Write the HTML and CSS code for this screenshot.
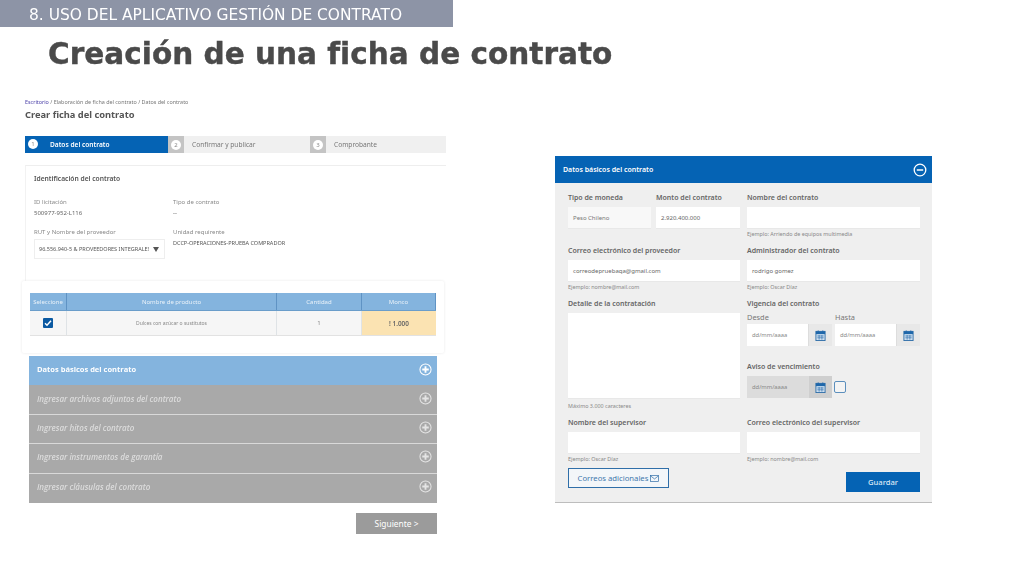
FILE: index.html
```html
<!DOCTYPE html>
<html lang="es">
<head>
<meta charset="utf-8">
<title>Creación de una ficha de contrato</title>
<link rel="stylesheet" href="styles.css">
</head>
<body>
<svg class="defs" width="0" height="0" aria-hidden="true">
  <symbol id="cal" viewBox="0 0 12 12">
    <rect x="1" y="1.5" width="10" height="10" fill="#cfe0f0" stroke="#2f6ea8"/>
    <rect x="1" y="1.5" width="10" height="3" fill="#1f67aa"/>
    <path d="M3.5 .5v2M8.500 .5v2" stroke="#1f67aa"/>
    <path d="M2.500 6.500h7M2.500 8.500h7M4.500 5.500v5M7.500 5.500v5" stroke="#3d7ab3" stroke-width=".8"/>
  </symbol>
  <symbol id="plus" viewBox="0 0 14 14">
    <circle cx="7" cy="7" r="6" fill="none" stroke="currentColor" stroke-width="1.100"/>
    <path d="M7 3.500v7M3.500 7h7" stroke="currentColor" stroke-width="2"/>
  </symbol>
</svg>

<header class="topbar">8. USO DEL APLICATIVO GESTIÓN DE CONTRATO</header>
<h1 class="title">Creación de una ficha de contrato</h1>

<main class="slide">
  <section class="left">
    <p class="crumbs"><span class="crumb-link">Escritorio</span> / Elaboración de ficha del contrato / Datos del contrato</p>
    <h2 class="page-title">Crear ficha del contrato</h2>

    <ol class="steps">
      <li class="step step-on"><span class="step-num">1</span><span class="step-text">Datos del contrato</span></li>
      <li class="step"><span class="step-box"><span class="step-num">2</span></span><span class="step-text">Confirmar y publicar</span></li>
      <li class="step"><span class="step-box"><span class="step-num">3</span></span><span class="step-text">Comprobante</span></li>
    </ol>

    <section class="ident">
      <h3 class="ident-title">Identificación del contrato</h3>
      <div class="ident-grid">
        <div><p class="k">ID licitación</p><p class="v">500977-952-L116</p></div>
        <div><p class="k">Tipo de contrato</p><p class="v">--</p></div>
        <div>
          <p class="k">RUT y Nombre del proveedor</p>
          <div class="select"><span class="select-text">96.556.940-5 &amp; PROVEEDORES INTEGRALE!</span><span class="caret"></span></div>
        </div>
        <div><p class="k">Unidad requirente</p><p class="v v-unit">DCCP-OPERACIONES-PRUEBA COMPRADOR</p></div>
      </div>
    </section>

    <section class="table-card">
      <div class="tbl tbl-head">
        <span class="c">Seleccione</span><span class="c">Nombre de producto</span><span class="c">Cantidad</span><span class="c">Monco</span>
      </div>
      <div class="tbl tbl-row">
        <span class="c"><span class="check"><svg width="8" height="8" viewBox="0 0 8 8"><path d="M1 4.200l2 2 4-4.400" fill="none" stroke="#fff" stroke-width="1.500"/></svg></span></span>
        <span class="c">Dulces con azúcar o sustitutos</span>
        <span class="c c-qty">1</span>
        <span class="c c-amt">! 1.000</span>
      </div>
    </section>

    <div class="accordion">
      <div class="acc acc-on"><span>Datos básicos del contrato</span><svg class="acc-ico"><use href="#plus"/></svg></div>
      <div class="acc"><span>Ingresar archivos adjuntos del contrato</span><svg class="acc-ico"><use href="#plus"/></svg></div>
      <div class="acc"><span>Ingresar hitos del contrato</span><svg class="acc-ico"><use href="#plus"/></svg></div>
      <div class="acc"><span>Ingresar instrumentos de garantía</span><svg class="acc-ico"><use href="#plus"/></svg></div>
      <div class="acc"><span>Ingresar cláusulas del contrato</span><svg class="acc-ico"><use href="#plus"/></svg></div>
    </div>
    <div class="next-wrap"><button class="next">Siguiente &gt;</button></div>
  </section>

  <section class="panel">
    <div class="panel-head">
      <span>Datos básicos del contrato</span>
      <svg class="minus" viewBox="0 0 14 14"><circle cx="7" cy="7" r="5.800" fill="none" stroke="#fff" stroke-width="1.300"/><path d="M3.800 7h6.400" stroke="#fff" stroke-width="1.500"/></svg>
    </div>
    <div class="form">
      <div class="col">
        <div class="pair">
          <div><p class="lbl">Tipo de moneda</p><div class="inp inp-dim">Peso Chileno</div></div>
          <div><p class="lbl">Monto del contrato</p><div class="inp">2.920.400.000</div></div>
        </div>
      </div>
      <div class="col">
        <p class="lbl">Nombre del contrato</p><div class="inp"></div>
        <p class="hint">Ejemplo: Arriendo de equipos multimedia</p>
      </div>

      <div class="col">
        <p class="lbl">Correo electrónico del proveedor</p><div class="inp">correodepruebaqa@gmail.com</div>
        <p class="hint">Ejemplo: nombre@mail.com</p>
      </div>
      <div class="col">
        <p class="lbl">Administrador del contrato</p><div class="inp">rodrigo gomez</div>
        <p class="hint">Ejemplo: Oscar Díaz</p>
      </div>

      <div class="col">
        <p class="lbl">Detalle de la contratación</p>
        <div class="area"></div>
        <p class="hint hint-area">Máximo 3.000 caracteres</p>
      </div>
      <div class="col">
        <p class="lbl">Vigencia del contrato</p>
        <div class="dates">
          <div><p class="sub">Desde</p><div class="date"><span class="date-text">dd/mm/aaaa</span><span class="date-btn"><svg class="cal"><use href="#cal"/></svg></span></div></div>
          <div><p class="sub">Hasta</p><div class="date"><span class="date-text">dd/mm/aaaa</span><span class="date-btn"><svg class="cal"><use href="#cal"/></svg></span></div></div>
        </div>
        <p class="lbl lbl-aviso">Aviso de vencimiento</p>
        <div class="aviso">
          <div class="date date-off"><span class="date-text">dd/mm/aaaa</span><span class="date-btn"><svg class="cal"><use href="#cal"/></svg></span></div>
          <span class="box"></span>
        </div>
      </div>

      <div class="col">
        <p class="lbl">Nombre del supervisor</p><div class="inp"></div>
        <p class="hint">Ejemplo: Oscar Díaz</p>
      </div>
      <div class="col">
        <p class="lbl">Correo electrónico del supervisor</p><div class="inp"></div>
        <p class="hint">Ejemplo: nombre@mail.com</p>
      </div>

      <div class="col foot-l">
        <button class="more">Correos adicionales <svg class="mail" viewBox="0 0 10 8"><rect x=".5" y=".5" width="9" height="7" fill="none" stroke="#2f6ea8" stroke-width=".8"/><path d="M.5 1l4.500 3.500L9.500 1" fill="none" stroke="#2f6ea8" stroke-width=".8"/></svg></button>
      </div>
      <div class="col foot-r"><button class="save">Guardar</button></div>
    </div>
  </section>
</main>
</body>
</html>
```
FILE: styles.css
```css
* { box-sizing: border-box; }
html, body { margin: 0; padding: 0; }
body {
  width: 1024px;
  height: 576px;
  overflow: hidden;
  background: #fff;
  font-family: "Noto Sans", "Open Sans", sans-serif;
  color: #555;
}
p, h1, h2, h3, ol { margin: 0; padding: 0; }
.defs { position: absolute; }

.topbar {
  width: 453px;
  height: 27px;
  padding-left: 29px;
  background: #8d94a6;
  color: #fff;
  font: 15.450px/30px "DejaVu Sans", sans-serif;
  white-space: nowrap;
  filter: blur(.3px);
}
.title {
  margin: 9px 0 0 48px;
  height: 36px;
  font: bold 29.550px/36px "DejaVu Sans", sans-serif;
  color: #4a4a4a;
  -webkit-text-stroke: .4px #4a4a4a;
  white-space: nowrap;
  filter: blur(.3px);
}

.slide {
  display: flex;
  align-items: flex-start;
  padding: 26px 0 0 25px;
  filter: blur(.3px);
}

/* left column */
.left { width: 421px; flex: none; }
.crumbs { height: 8px; font-size: 5.400px; line-height: 8px; color: #777; white-space: nowrap; }
.crumb-link { color: #4a3fa8; }
.page-title { margin-top: 2px; height: 14px; font: 700 9.300px/13px "Noto Sans", sans-serif; color: #555; white-space: nowrap; }

.steps { display: flex; list-style: none; height: 17px; margin-top: 14px; background: #f0f0f0; }
.step { flex: none; width: 142px; display: flex; align-items: center; padding-bottom: 1px; font-size: 6.600px; color: #777; }
.step:last-child { width: 136px; }
.step-on { background: #0563b4; color: #fff; padding-left: 3px; width: 143px; }
.step-box { width: 16px; height: 17px; margin-bottom: -1px; background: #c4c4c4; display: flex; align-items: center; justify-content: center; }
.step-num {
  width: 10px; height: 10px; border-radius: 50%;
  background: #fff; color: #888; font-size: 6px; line-height: 10px; text-align: center;
}
.step-on .step-text { margin-left: 12px; font-weight: 600; }
.step-text { margin-left: 8px; white-space: nowrap; }

.ident {
  height: 116px;
  margin-top: 12px;
  padding: 8px 0 0 8px;
  border-top: 1px solid #eee;
  border-left: 1px solid #f2f2f2;
}
.ident-title { font: 600 6.700px/10px "Noto Sans", sans-serif; color: #555; }
.ident-grid { display: grid; grid-template-columns: 139px 220px; grid-template-rows: 30px auto; margin-top: 14px; }
.k { font-size: 6px; line-height: 9px; color: #888; }
.v { font-size: 6px; line-height: 10px; color: #666; margin-top: 1px; white-space: nowrap; }
.v-unit { font-size: 5.500px; color: #555; }
.select {
  width: 131px; height: 20px; margin-top: 2px; padding: 0 5px 0 4px;
  display: flex; align-items: center; justify-content: space-between;
  border: 1px solid #eee;
  font-size: 5.500px; color: #555;
}
.select-text { white-space: nowrap; overflow: hidden; width: 110px; }
.caret { width: 0; height: 0; border: 3px solid transparent; border-top: 5px solid #555; border-bottom: 0; }

.table-card {
  width: 422px;
  height: 72px;
  margin: 0 0 3px -3px;
  padding: 12px 8px 0;
  border-radius: 2px;
  box-shadow: 0 0 3px #e8e8e8;
}
.tbl { display: grid; grid-template-columns: 37px 210px 85px 74px; width: 406px; font-size: 5.500px; text-align: center; }
.c { display: flex; align-items: center; justify-content: center; border-right: 1px solid #dfe3e6; white-space: nowrap; }
.tbl-head { height: 17px; background: #84b4de; color: #eaf2f9; font-size: 6px; }
.tbl-head .c { border-right-color: #5f93c4; }
.tbl-row { height: 26px; background: #f6f6f6; border-top: 1px solid #6a9dca; border-bottom: 1px solid #e2e2e2; color: #888; font-size: 5px; }
.c-qty { font-size: 6px; }
.c-amt { background: #fbe3b2; color: #666; font-size: 6.400px; font-weight: 600; border: 0; }
.check { width: 10px; height: 10px; border-radius: 1px; background: #0b5aa2; display: flex; align-items: center; justify-content: center; }

.accordion { width: 408px; margin-left: 4px; }
.acc {
  height: 29.400px;
  padding: 0 5px 3px 8px;
  display: flex; align-items: center; justify-content: space-between;
  background: #a9a9a9;
  border-bottom: 1px solid #d9d9d9;
  color: #dcdcdc;
  font: italic 600 8px "Open Sans", sans-serif;
}
.acc:last-child { border-bottom: 0; }
.acc-on { background: #84b4de; color: #fff; font-style: normal; border-bottom: 0; font-size: 7.500px; font-weight: 700; }
.acc-ico { width: 13px; height: 13px; color: #e4e4e4; flex: none; }
.acc-on .acc-ico { color: #fff; }
.next-wrap { width: 408px; margin: 10px 0 0 4px; display: flex; justify-content: flex-end; }
.next {
  width: 81px; height: 21px; padding: 0; border: 0;
  background: #9b9b9b; color: #fff;
  font: 8.400px "Noto Sans", sans-serif;
}

/* right panel */
.panel {
  width: 377px;
  height: 347px;
  margin: 58px 0 0 109px;
  flex: none;
  background: #efefef;
  border-bottom: 1px solid #bdbdbd;
}
.panel-head {
  height: 27px; padding: 0 5px 0 8px;
  display: flex; align-items: center; justify-content: space-between;
  background: #0563b4; color: #fff;
  font: 600 7px "Noto Sans", sans-serif;
}
.minus { width: 14px; height: 14px; }
.form {
  display: grid;
  grid-template-columns: 172px 173px;
  column-gap: 7px;
  padding: 9px 0 0 13px;
}
.col { min-width: 0; }
.pair { display: grid; grid-template-columns: 83px 84px; column-gap: 5px; }
.lbl { height: 15px; font: 600 7px/11px "Noto Sans", sans-serif; color: #666; white-space: nowrap; }
.lbl-aviso { margin-top: 15px; }
.sub { height: 9px; margin-bottom: 2px; font-size: 7.400px; line-height: 9px; color: #777; }
.inp {
  height: 22px; padding: 0 5px;
  display: flex; align-items: center;
  background: #fff; border-bottom: 1px solid #e8e8e8;
  font-size: 6px; color: #666; white-space: nowrap;
}
.inp-dim { background: #f8f8f8; color: #777; }
.hint { height: 16px; padding-top: 1px; font-size: 5.400px; line-height: 8px; color: #888; white-space: nowrap; }
.hint-area { height: 18px; padding-top: 3px; }
.area { height: 86px; background: #fff; border-bottom: 1px solid #e8e8e8; }
.dates { display: grid; grid-template-columns: 85px 85px; column-gap: 3px; }
.date { width: 85px; height: 22px; display: flex; background: #fff; }
.date-text { flex: 1; padding-left: 5px; font-size: 5.800px; line-height: 22px; color: #888; }
.date-btn { width: 24px; display: flex; align-items: center; justify-content: center; background: #e8e8e8; border-left: 1px solid #ddd; }
.cal { width: 11px; height: 11px; }
.aviso { display: flex; align-items: center; gap: 2px; }
.date-off { background: #dcdcdc; height: 22px; }
.date-off .date-btn { background: #cfcfcf; }
.box { width: 12px; height: 12px; border: 1px solid #5c8fbd; border-radius: 2px; background: #f4f4f4; }
.foot-l, .foot-r { margin-top: -2px; height: 24px; }
.foot-r { display: flex; justify-content: flex-end; padding-top: 4px; }
.more {
  width: 101px; height: 20px; padding: 0;
  background: #f3f6f9; border: 1px solid #2f6ea8;
  color: #3f78ad; font: 7.700px "Noto Sans", sans-serif; white-space: nowrap;
  display: flex; align-items: center; justify-content: center; gap: 2px;
}
.mail { width: 9px; height: 7px; }
.save {
  width: 74px; height: 20px; padding: 0; border: 0;
  background: #0563b4; color: #dbe8f4;
  font: 500 7.600px "Noto Sans", sans-serif;
}
```
